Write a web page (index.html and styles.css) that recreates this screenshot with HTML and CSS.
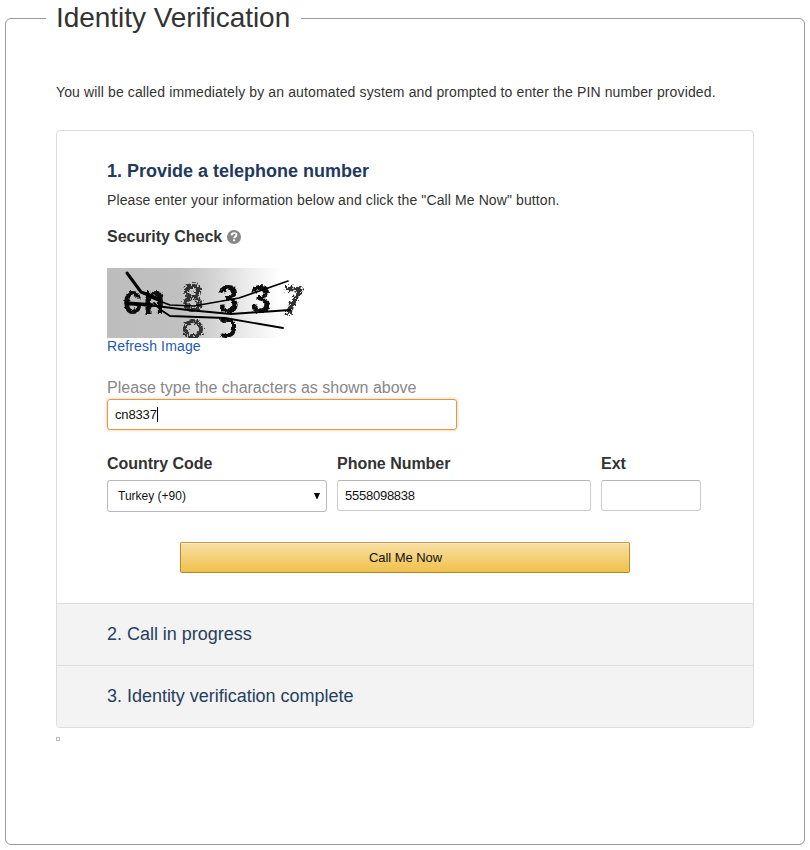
FILE: index.html
```html
<!DOCTYPE html>
<html lang="en">
<head>
<meta charset="utf-8">
<title>Identity Verification</title>
<link rel="stylesheet" href="styles.css">
</head>
<body>
<fieldset class="frame">
  <legend class="title">Identity Verification</legend>
  <p class="intro">You will be called immediately by an automated system and prompted to enter the PIN number provided.</p>
  <div class="card">
    <section class="step-open">
      <h2 class="step-title">1. Provide a telephone number</h2>
      <p class="hint">Please enter your information below and click the "Call Me Now" button.</p>
      <div class="check-row">
        <span class="check-label">Security Check</span>
        <svg class="help" viewBox="0 0 14 14"><circle cx="7" cy="7" r="7" fill="#888"/><path d="M4.6 5.4C4.7 3.7 5.7 3.1 7.1 3.1C8.6 3.1 9.5 3.9 9.5 5.1C9.5 6.6 7.2 6.7 7.2 8.3" fill="none" stroke="#fff" stroke-width="1.9"/><rect x="6.1" y="9.3" width="2" height="1.9" fill="#fff"/></svg>
      </div>
      <svg class="captcha" viewBox="0 0 200 70">
        <defs>
          <linearGradient id="fade"><stop offset="0" stop-color="#bdbdbd"/><stop offset=".36" stop-color="#c0c0c0"/><stop offset=".52" stop-color="#d2d2d2"/><stop offset=".7" stop-color="#ececec"/><stop offset=".87" stop-color="#fff"/></linearGradient>
          <filter id="rough" filterUnits="userSpaceOnUse" x="0" y="0" width="200" height="70"><feTurbulence type="fractalNoise" baseFrequency=".35" numOctaves="2" seed="4" result="n"/><feDisplacementMap in="SourceGraphic" in2="n" xChannelSelector="R" yChannelSelector="G" scale="4"/><feGaussianBlur stdDeviation=".35"/></filter>
          <filter id="smudge" filterUnits="userSpaceOnUse" x="0" y="0" width="200" height="70"><feTurbulence type="fractalNoise" baseFrequency=".5" numOctaves="2" seed="8" result="n"/><feDisplacementMap in="SourceGraphic" in2="n" xChannelSelector="R" yChannelSelector="G" scale="9"/><feGaussianBlur stdDeviation=".7"/></filter>
        </defs>
        <rect width="200" height="70" fill="url(#fade)"/>
        <g class="glyphs" filter="url(#rough)">
          <text class="low" x="16" y="46" textLength="19" lengthAdjust="spacingAndGlyphs">c</text>
          <text class="low" x="36" y="46" textLength="22" lengthAdjust="spacingAndGlyphs">n</text>
          <text x="111" y="45" textLength="21" lengthAdjust="spacingAndGlyphs">3</text>
          <text x="143" y="45" textLength="21" lengthAdjust="spacingAndGlyphs">3</text>
          <path d="M114 53C120 50 128 53 127 60C127 68 119 69 114 67" fill="none" stroke="#080808" stroke-width="4"/>
        </g>
        <g class="glyphs faded" filter="url(#smudge)">
          <text x="75" y="44" textLength="21" lengthAdjust="spacingAndGlyphs">8</text>
          <text x="175" y="47" textLength="21" lengthAdjust="spacingAndGlyphs" transform="rotate(5 185 35)">7</text>
          <ellipse cx="86" cy="61" rx="8" ry="8" fill="none" stroke="#303030" stroke-width="4"/>
        </g>
        <g fill="none" stroke="#000" stroke-linecap="round" stroke-linejoin="round">
          <path d="M20 5L34 24L52 31" stroke-width="3"/>
          <path d="M34 24L47 31L63 37L87 38L132 30L181 13" stroke-width="1.7"/>
          <path d="M19 36L49 38L81 42L124 46L183 42" stroke-width="2"/>
          <path d="M19 35L45 37" stroke-width="3.3"/>
          <path d="M47 35L54 42L63 48L118 50L176 60" stroke-width="1.8"/>
        </g>
      </svg>
      <a class="refresh">Refresh Image</a>
      <div class="prompt">Please type the characters as shown above</div>
      <div class="input focused"><span class="typed">cn8337</span><i class="caret"></i></div>
      <div class="fields">
        <div class="field"><label>Country Code</label><div class="input select"><span class="choice">Turkey (+90)</span><svg class="arrow" viewBox="0 0 6 6"><path d="M0 0H6L3.4 6H2.6Z"/></svg></div></div>
        <div class="field"><label>Phone Number</label><div class="input"><span class="phone">5558098838</span></div></div>
        <div class="field"><label>Ext</label><div class="input"></div></div>
      </div>
      <button class="call" type="button"><span>Call Me Now</span></button>
    </section>
    <section class="step">2. Call in progress</section>
    <section class="step">3. Identity verification complete</section>
  </div>
  <i class="pixel"></i>
</fieldset>
</body>
</html>
```
FILE: styles.css
```css
* { box-sizing: border-box; }
body { margin: 0; background: #fff; color: #333; font-family: "Liberation Sans", Arial, sans-serif; font-size: 14px; }
.frame { margin: 0 5px; height: 845px; padding: 0 50px 0 50px; border: 1px solid #999; border-radius: 6px; min-width: 0; }
.title { margin-left: -10px; padding: 0 10px; height: 37px; width: 255px; line-height: 36px; font-size: 28px; letter-spacing: -.04px; white-space: nowrap; }
.intro { margin: 45px 0 0; line-height: 20px; height: 48px; letter-spacing: .127px; white-space: nowrap; }
.card { width: 698px; border: 1px solid #ddd; border-radius: 4px; overflow: hidden; }
.step-open { height: 472px; padding: 30px 50px 0; }
.step-title { margin: 0; font-size: 18px; line-height: 20px; color: #1f3a5c; white-space: nowrap; }
.hint { margin: 9px 0 0; line-height: 20px; letter-spacing: .108px; white-space: nowrap; }
.check-row { display: flex; align-items: center; gap: 5px; height: 20px; margin-top: 17px; }
.check-label { font-size: 16px; font-weight: bold; line-height: 20px; letter-spacing: -.03px; }
.help { width: 14px; height: 14px; margin-top: -1px; }
.captcha { display: block; width: 200px; height: 70px; margin-top: 21px; }
.glyphs { font: bold 41px "Liberation Sans", sans-serif; fill: #080808; }
.low { font-size: 42px; }
.faded { fill: #303030; }
.refresh { display: block; line-height: 16px; letter-spacing: .15px; color: #1f5ab0; }
.prompt { margin-top: 24px; height: 21px; line-height: 20px; font-size: 16px; color: #888; }
.input { display: flex; align-items: center; height: 31px; padding: 0 7px; border: 1px solid #ccc; border-top-color: #b5b5b5; border-radius: 3px; color: #111; font-size: 13px; }
.typed { letter-spacing: -.15px; }
.phone { letter-spacing: -.25px; }
.focused { width: 350px; border-color: #e9963e; box-shadow: 0 0 3px rgba(228,121,17,.5); }
.caret { width: 1px; height: 15px; background: #000; }
.fields { display: grid; grid-template-columns: 220px 254px 100px; column-gap: 10px; margin-top: 24px; }
.field label { display: block; height: 26px; line-height: 20px; font-size: 16px; font-weight: bold; letter-spacing: -.03px; }
.select { height: 32px; justify-content: space-between; padding: 0 6px 0 10px; border-color: #b8b8b8; font-size: 12px; }
.arrow { width: 6px; height: 6px; }
.call { display: block; width: 450px; height: 31px; margin: 30px 0 0 73px; padding: 0; border: 1px solid; border-color: #c89c3d #b98b25 #a88734; border-radius: 2px; background: linear-gradient(#f7dfa5, #f0c14b); box-shadow: inset 0 1px 0 rgba(255,255,255,.4); color: #111; font: 13px "Liberation Sans", sans-serif; }
.call span { letter-spacing: -.05px; padding-left: 1px; }
.step { height: 62px; padding-left: 50px; line-height: 60px; border-top: 1px solid #ddd; background: #f3f3f3; color: #263f5e; font-size: 18px; letter-spacing: -.02px; }
.pixel { display: block; width: 4px; height: 4px; margin-top: 9px; border: 1px solid #bbb; }
```
